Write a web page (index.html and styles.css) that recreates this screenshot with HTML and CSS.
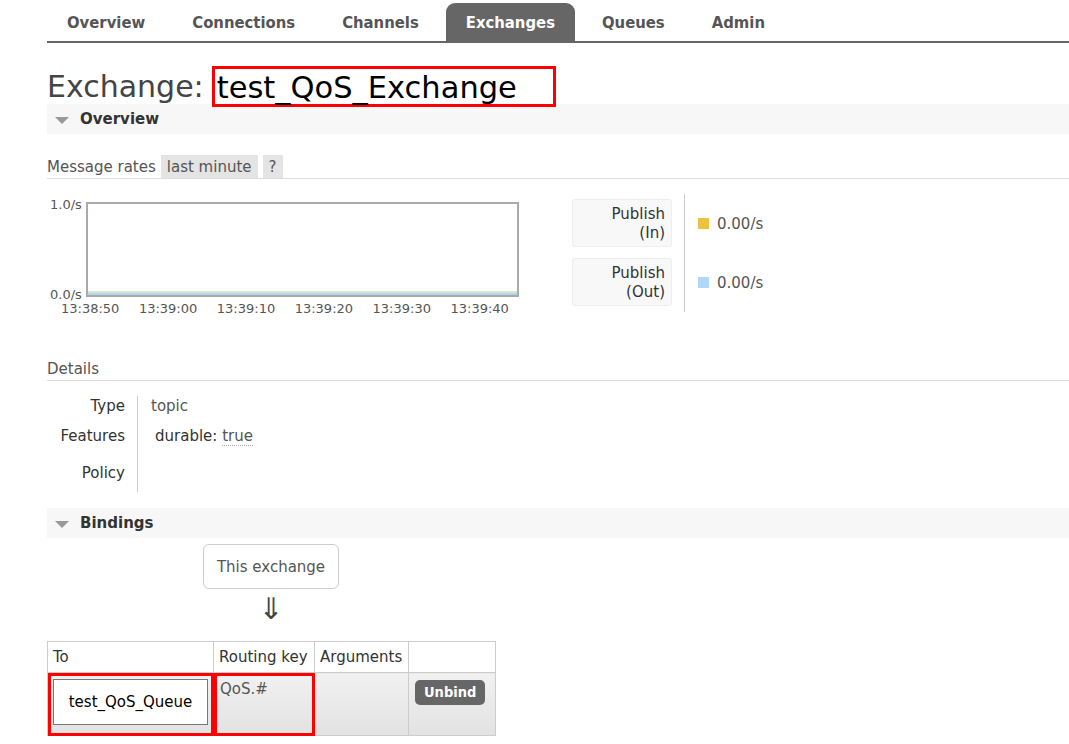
FILE: index.html
```html
<!DOCTYPE html>
<html>
<head>
<meta charset="utf-8">
<link rel="stylesheet" href="styles.css">
</head>
<body>
<div class="page">
  <ul class="tabs">
    <li class="tab">Overview</li>
    <li class="tab">Connections</li>
    <li class="tab">Channels</li>
    <li class="tab active">Exchanges</li>
    <li class="tab">Queues</li>
    <li class="tab">Admin</li>
  </ul>

  <h1 class="title"><span>Exchange:</span><span class="title-name">test_QoS_Exchange</span></h1>

  <div class="section-head"><span class="tri"></span>Overview</div>

  <div class="rates-bar">
    <span>Message rates</span>
    <span class="chip">last minute</span>
    <span class="chip">?</span>
  </div>

  <div class="rates">
    <div class="chart">
      <div class="chart-row">
        <div class="yaxis"><span>1.0/s</span><span>0.0/s</span></div>
        <div class="plot"><div class="series s1"></div><div class="series s2"></div></div>
      </div>
      <div class="xaxis">
        <span>13:38:50</span><span>13:39:00</span><span>13:39:10</span><span>13:39:20</span><span>13:39:30</span><span>13:39:40</span>
      </div>
    </div>
    <div class="legend">
      <div class="legend-label">Publish<br>(In)</div>
      <div class="legend-label">Publish<br>(Out)</div>
    </div>
    <div class="values">
      <div class="value"><span class="sq yellow"></span>0.00/s</div>
      <div class="value"><span class="sq blue"></span>0.00/s</div>
    </div>
  </div>

  <div class="sub-head">Details</div>
  <div class="details">
    <div class="dl-labels">
      <div class="dl-row">Type</div>
      <div class="dl-row">Features</div>
      <div class="dl-row pol">Policy</div>
    </div>
    <div class="dl-values">
      <div class="dl-row">topic</div>
      <div class="dl-row feat">durable: <abbr class="dotted">true</abbr></div>
      <div class="dl-row pol"></div>
    </div>
  </div>

  <div class="section-head bind-head"><span class="tri"></span>Bindings</div>

  <div class="flow">
    <div class="this-ex">This exchange</div>
    <div class="arrow">&#8659;</div>
  </div>

  <table class="bindings">
    <colgroup>
      <col class="w1"><col class="w2"><col class="w3"><col class="w4">
    </colgroup>
    <thead>
      <tr><th>To</th><th>Routing key</th><th>Arguments</th><th></th></tr>
    </thead>
    <tbody>
      <tr>
        <td class="to-cell mark-cell"><div class="queue-box">test_QoS_Queue</div></td>
        <td class="mark-cell">QoS.#</td>
        <td></td>
        <td class="btn-cell"><span class="btn">Unbind</span></td>
      </tr>
    </tbody>
  </table>
</div>
</body>
</html>
```

FILE: styles.css
```css
html, body {
  margin: 0;
  padding: 0;
  background: #fff;
}
body {
  font-family: "DejaVu Sans", Verdana, sans-serif;
  font-size: 15px;
  color: #444;
}
.page {
  padding-left: 47px;
}
.tabs {
  list-style: none;
  margin: 0;
  padding: 3px 0 0 0;
  display: flex;
  gap: 7px;
  border-bottom: 2px solid #666;
}
.tab {
  font-family: "DejaVu Sans Condensed", "DejaVu Sans", sans-serif;
  font-stretch: condensed;
  font-weight: bold;
  font-size: 16.5px;
  color: #555;
  padding: 0 20px;
  height: 38px;
  line-height: 39px;
  border-radius: 9px 9px 0 0;
}
.tab.active {
  background: #666;
  color: #fff;
}
.title {
  font-weight: normal;
  font-size: 30px;
  margin: 23px 0 0 0;
  color: #444;
  height: 41px;
  display: flex;
  align-items: center;
  gap: 8px;
}
.title-name {
  color: #000;
  border: 3px solid #f00;
  height: 35px;
  line-height: 37px;
  padding: 0 36px 0 2px;
  font-size: 30.5px;
}
.section-head {
  background: #f7f7f7;
  height: 30px;
  font-weight: bold;
  font-size: 15px;
  color: #333;
  display: flex;
  align-items: center;
  margin-top: -3px;
}
.tri {
  width: 0;
  height: 0;
  border-left: 7px solid transparent;
  border-right: 7px solid transparent;
  border-top: 7px solid #999;
  margin: 2px 11px 0 8px;
}
.rates-bar {
  margin-top: 21px;
  display: flex;
  align-items: center;
  gap: 5px;
  border-bottom: 1px solid #ddd;
  height: 23px;
  color: #555;
}
.chip {
  background: #e4e4e4;
  padding: 0 6px;
  height: 23px;
  line-height: 25px;
}
.rates {
  display: flex;
  margin-top: 15px;
  height: 118px;
}
.chart {
  width: 480px;
}
.chart-row {
  display: flex;
  margin-top: 8px;
  height: 95px;
}
.yaxis {
  width: 39px;
  display: flex;
  flex-direction: column;
  justify-content: space-between;
  font-size: 13px;
  line-height: 16px;
  color: #555;
  height: 106px;
  margin-top: -5px;
  padding-left: 3px;
  box-sizing: border-box;
}
.plot {
  width: 433px;
  height: 95px;
  border: 2px solid #aaa;
  box-sizing: border-box;
  position: relative;
}
.series {
  position: absolute;
  left: 0;
  right: 0;
  height: 2px;
}
.s1 { bottom: 2px; background: #dde5c8; }
.s2 { bottom: 0; background: #afd8f8; }
.xaxis {
  display: flex;
  gap: 19.5px;
  font-size: 13px;
  line-height: 15px;
  color: #555;
  padding-left: 14px;
  margin-top: 4px;
}
.legend {
  margin-left: 45px;
  display: flex;
  flex-direction: column;
  gap: 11px;
  padding-top: 5px;
  width: 112px;
  border-right: 1px solid #ccc;
}
.legend-label {
  width: 100px;
  box-sizing: border-box;
  background: #f8f8f8;
  border: 1px solid #eee;
  border-radius: 3px;
  text-align: right;
  padding: 5px 6px 3px 6px;
  line-height: 19px;
  color: #333;
}
.values {
  padding-left: 13px;
  display: flex;
  flex-direction: column;
  gap: 36px;
  padding-top: 18px;
}
.value {
  display: flex;
  align-items: center;
  gap: 8px;
  font-size: 15px;
  color: #555;
  height: 23px;
}
.sq {
  width: 11px;
  height: 11px;
  display: inline-block;
}
.yellow { background: #edc240; }
.blue { background: #afd8f8; }
.sub-head {
  margin-top: 46px;
  border-bottom: 1px solid #ddd;
  padding-bottom: 1px;
  padding-top: 1px;
  color: #555;
  line-height: 20px;
}
.details {
  display: flex;
  margin-top: 15px;
  height: 96px;
}
.dl-labels {
  width: 78px;
  text-align: right;
  border-right: 1px solid #ccc;
  padding-right: 12px;
  color: #333;
}
.dl-row {
  height: 30px;
  line-height: 20px;
}
.dl-row.pol { margin-top: 7px; }
.dl-values {
  padding-left: 13px;
  color: #555;
}
.feat {
  color: #333;
  padding-left: 4px;
}
.dotted {
  text-decoration: none;
  border-bottom: 1px dotted #aaa;
  color: #555;
}
.bind-head {
  margin-top: 16px;
}
.flow {
  width: 448px;
  display: flex;
  flex-direction: column;
  align-items: center;
  margin-top: 6px;
}
.this-ex {
  border: 1px solid #ccc;
  border-radius: 6px;
  padding: 0 13px;
  height: 43px;
  line-height: 45px;
  color: #555;
}
.arrow {
  font-size: 30px;
  color: #444;
  line-height: 30px;
  margin-top: 5px;
  height: 30px;
}
.bindings {
  border-collapse: collapse;
  table-layout: fixed;
  width: 448px;
  margin-top: 17px;
  color: #333;
}
.w1 { width: 166px; }
.w2 { width: 101px; }
.w3 { width: 94px; }
.w4 { width: 87px; }
.bindings th {
  font-weight: normal;
  text-align: left;
  border: 1px solid #ccc;
  height: 30px;
  padding: 0 5px;
  vertical-align: middle;
  line-height: 30px;
  white-space: nowrap;
}
.bindings td {
  border: 1px solid #ccc;
  height: 63px;
  box-sizing: border-box;
  vertical-align: top;
  padding: 7px 6px 0 6px;
  background: linear-gradient(#f1f1f1, #e2e2e2);
  color: #555;
}
.bindings td.mark-cell {
  outline: 3px solid #f00;
  outline-offset: -3px;
}
.bindings td.to-cell {
  padding: 6px 5px 0 5px;
}
.queue-box {
  background: #fff;
  border: 1px solid #777;
  height: 44px;
  line-height: 44px;
  text-align: center;
  color: #000;
}
.btn-cell {
  padding-left: 5px;
}
.btn {
  display: inline-block;
  background: #666;
  color: #fff;
  border-radius: 5px;
  padding: 0 9px;
  height: 25px;
  line-height: 25px;
  font-weight: bold;
  font-family: "DejaVu Sans Condensed", "DejaVu Sans", sans-serif;
  font-stretch: condensed;
  font-size: 14.5px;
}
```
